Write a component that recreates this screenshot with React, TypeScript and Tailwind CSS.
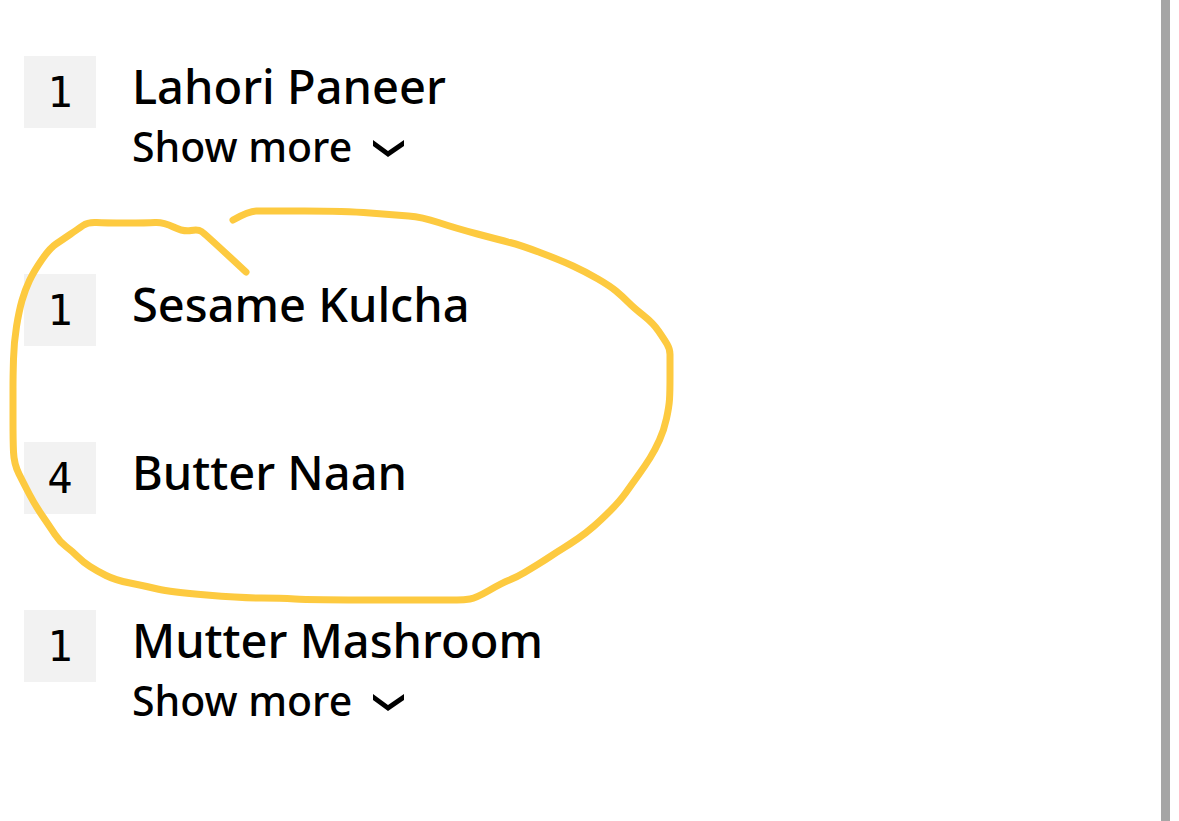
type OrderItem = {
  name: string;
  quantity: number;
  hasDetails?: boolean;
};

type Point = [number, number];

const items: OrderItem[] = [
  { name: 'Lahori Paneer', quantity: 1, hasDetails: true },
  { name: 'Sesame Kulcha', quantity: 1 },
  { name: 'Butter Naan', quantity: 4 },
  { name: 'Mutter Mashroom', quantity: 1, hasDetails: true },
];

const markerPoints: Point[] = [
  [233, 220], [249, 211], [264, 211], [345, 211], [395, 215], [422, 217], [455, 228], [500, 240],
  [520, 245], [560, 260], [586, 272], [610, 286], [622, 296], [634, 308], [653, 323], [664, 339],
  [670, 349], [670, 360], [670, 392], [669, 407], [664, 430], [655, 450], [645, 466], [632, 484],
  [620, 501], [601, 520], [586, 533], [570, 544], [557, 552], [545, 560], [532, 568], [517, 577],
  [502, 583], [476, 598], [464, 600], [450, 600], [310, 600], [280, 598], [243, 598], [170, 592],
  [145, 586], [115, 580], [97, 571], [83, 562], [72, 551], [60, 542], [50, 527], [35, 505],
  [24, 484], [14, 464], [13, 440], [13, 400], [13, 376], [14, 342], [19, 311], [25, 290],
  [34, 271], [50, 248], [62, 240], [78, 229], [88, 222], [105, 223], [147, 223], [163, 222],
  [184, 232], [198, 229], [205, 234], [246, 272],
];

// Rounds the corners by running each curve between segment midpoints
function smoothPath(points: Point[]) {
  let d = `M${points[0][0]} ${points[0][1]}`;
  for (let i = 1; i < points.length - 1; i++) {
    const [x, y] = points[i];
    const [nx, ny] = points[i + 1];
    d += ` Q${x} ${y} ${(x + nx) / 2} ${(y + ny) / 2}`;
  }
  const [lx, ly] = points[points.length - 1];
  return `${d} L${lx} ${ly}`;
}

function Chevron() {
  return (
    <svg className="h-7 w-8" viewBox="0 0 32 28" fill="currentColor" aria-hidden="true">
      <path d="M1 7v6l15 11 16-11V7L16 18z" />
    </svg>
  );
}

function OrderRow({ item }: { item: OrderItem }) {
  return (
    <li className="flex items-start gap-9">
      <span className="flex size-18 shrink-0 items-center justify-center bg-[#f2f2f2] font-['DejaVu_Sans_Mono',monospace] text-[42px]">
        {item.quantity}
      </span>
      <div>
        <h2 className="text-[47px] leading-15 font-medium">{item.name}</h2>
        {item.hasDetails && (
          <button type="button" className="flex h-[62px] items-center gap-5 text-[41px] font-medium">
            Show more
            <Chevron />
          </button>
        )}
      </div>
    </li>
  );
}

export default function App() {
  return (
    <main className="relative flex min-h-screen bg-white pr-[9px] font-['Noto_Sans',sans-serif] text-black">
      <ul className="flex flex-1 flex-col gap-24 px-6 py-14">
        {items.map((item) => (
          <OrderRow key={item.name} item={item} />
        ))}
      </ul>
      <div className="w-[9px] bg-[#a5a5a5]" />

      {/* Marker drawn over the order */}
      <svg
        className="pointer-events-none absolute top-0 left-0 h-[620px] w-[700px]"
        viewBox="0 0 700 620"
        fill="none"
        stroke="#fdca40"
        strokeWidth="7"
        strokeLinecap="round"
        strokeLinejoin="round"
        aria-hidden="true"
      >
        <path d={smoothPath(markerPoints)} />
      </svg>
    </main>
  );
}
